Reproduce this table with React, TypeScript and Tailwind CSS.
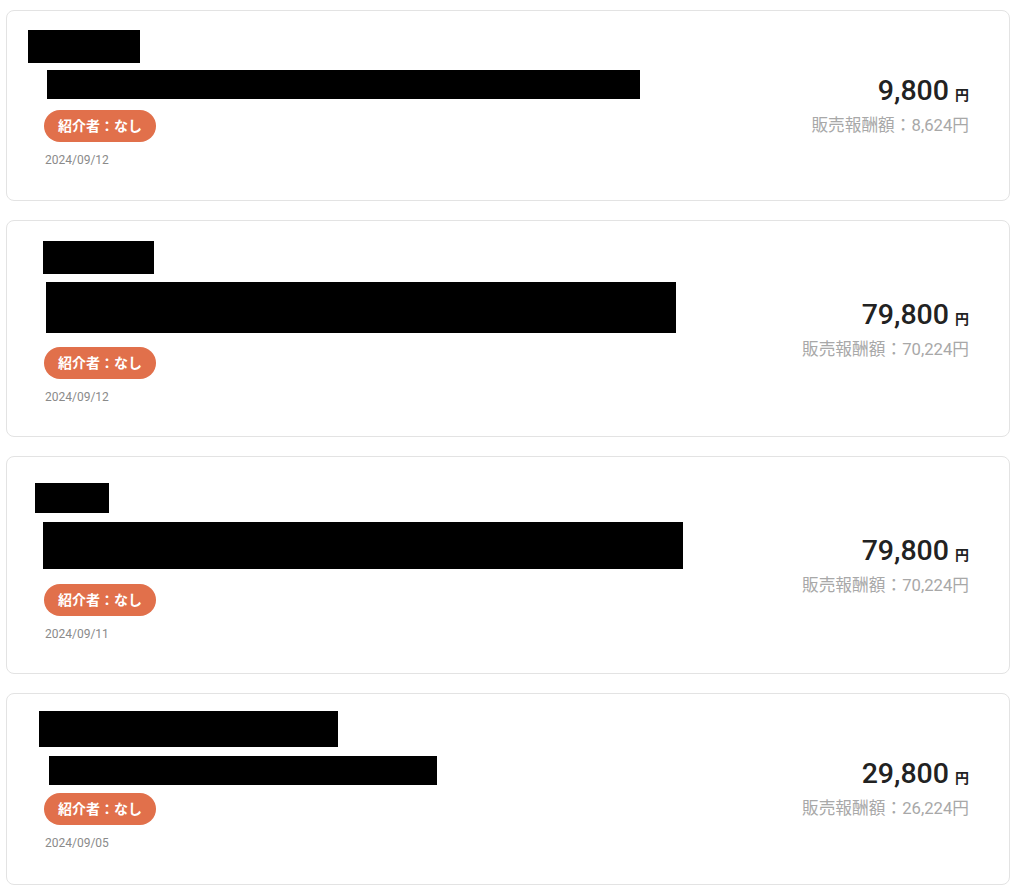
const font = {
  fontFamily: "Roboto, 'Noto Sans CJK JP', sans-serif",
};

type Sale = {
  box1: string;
  box2: string;
  gapA: string;
  gapB: string;
  pb: string;
  price: string;
  reward: string;
  date: string;
};

const sales: Sale[] = [
  {
    box1: "ml-[1px] mt-0 w-[112px] h-[33px]",
    box2: "ml-[20px] w-[593px] h-[29px]",
    gapA: "mt-[7px]",
    gapB: "mt-[11px]",
    pb: "pb-[32px]",
    price: "9,800",
    reward: "8,624",
    date: "2024/09/12",
  },
  {
    box1: "ml-[16px] mt-px w-[111px] h-[33px]",
    box2: "ml-[19px] w-[630px] h-[51px]",
    gapA: "mt-[8px]",
    gapB: "mt-[14px]",
    pb: "pb-[31px]",
    price: "79,800",
    reward: "70,224",
    date: "2024/09/12",
  },
  {
    box1: "ml-[8px] mt-[7px] w-[74px] h-[30px]",
    box2: "ml-[16px] w-[640px] h-[47px]",
    gapA: "mt-[9px]",
    gapB: "mt-[15px]",
    pb: "pb-[31px]",
    price: "79,800",
    reward: "70,224",
    date: "2024/09/11",
  },
  {
    box1: "ml-[12px] -mt-[2px] w-[299px] h-[36px]",
    box2: "ml-[22px] w-[388px] h-[29px]",
    gapA: "mt-[9px]",
    gapB: "mt-[8px]",
    pb: "pb-[33px]",
    price: "29,800",
    reward: "26,224",
    date: "2024/09/05",
  },
];

function SaleCard({ sale }: { sale: Sale }) {
  return (
    <div
      className={`flex items-center justify-between border border-[#e3e3e3] rounded-lg bg-white pl-[20px] pr-[40px] pt-[19px] ${sale.pb}`}
    >
      <div className="flex flex-col items-start">
        <div className={`bg-black ${sale.box1}`} />
        <div className={`bg-black ${sale.box2} ${sale.gapA}`} />
        <span
          className={`ml-[17px] ${sale.gapB} h-[32px] px-[14px] flex items-center rounded-full bg-[#e1704b] text-white text-[14px] font-bold`}
        >
          紹介者：なし
        </span>
        <span className="ml-[18px] mt-[10px] text-[12px] leading-4 text-[#8a8a8a]">
          {sale.date}
        </span>
      </div>
      <div className="flex flex-col items-end pt-[16px]">
        <div className="flex items-baseline text-[#222]">
          <span className="text-[28.5px] font-medium leading-8">{sale.price}</span>
          <span className="ml-[6px] text-[14px] font-bold">円</span>
        </div>
        <div className="mt-[6px] text-[16.7px] text-[#a8a8a8]">
          販売報酬額：{sale.reward}円
        </div>
      </div>
    </div>
  );
}

export default function App() {
  return (
    <div style={font} className="min-h-screen bg-white pl-[6px] pr-[14px] pt-[10px]">
      <div className="flex flex-col gap-[19px]">
        {sales.map((s, i) => (
          <SaleCard key={i} sale={s} />
        ))}
      </div>
    </div>
  );
}
